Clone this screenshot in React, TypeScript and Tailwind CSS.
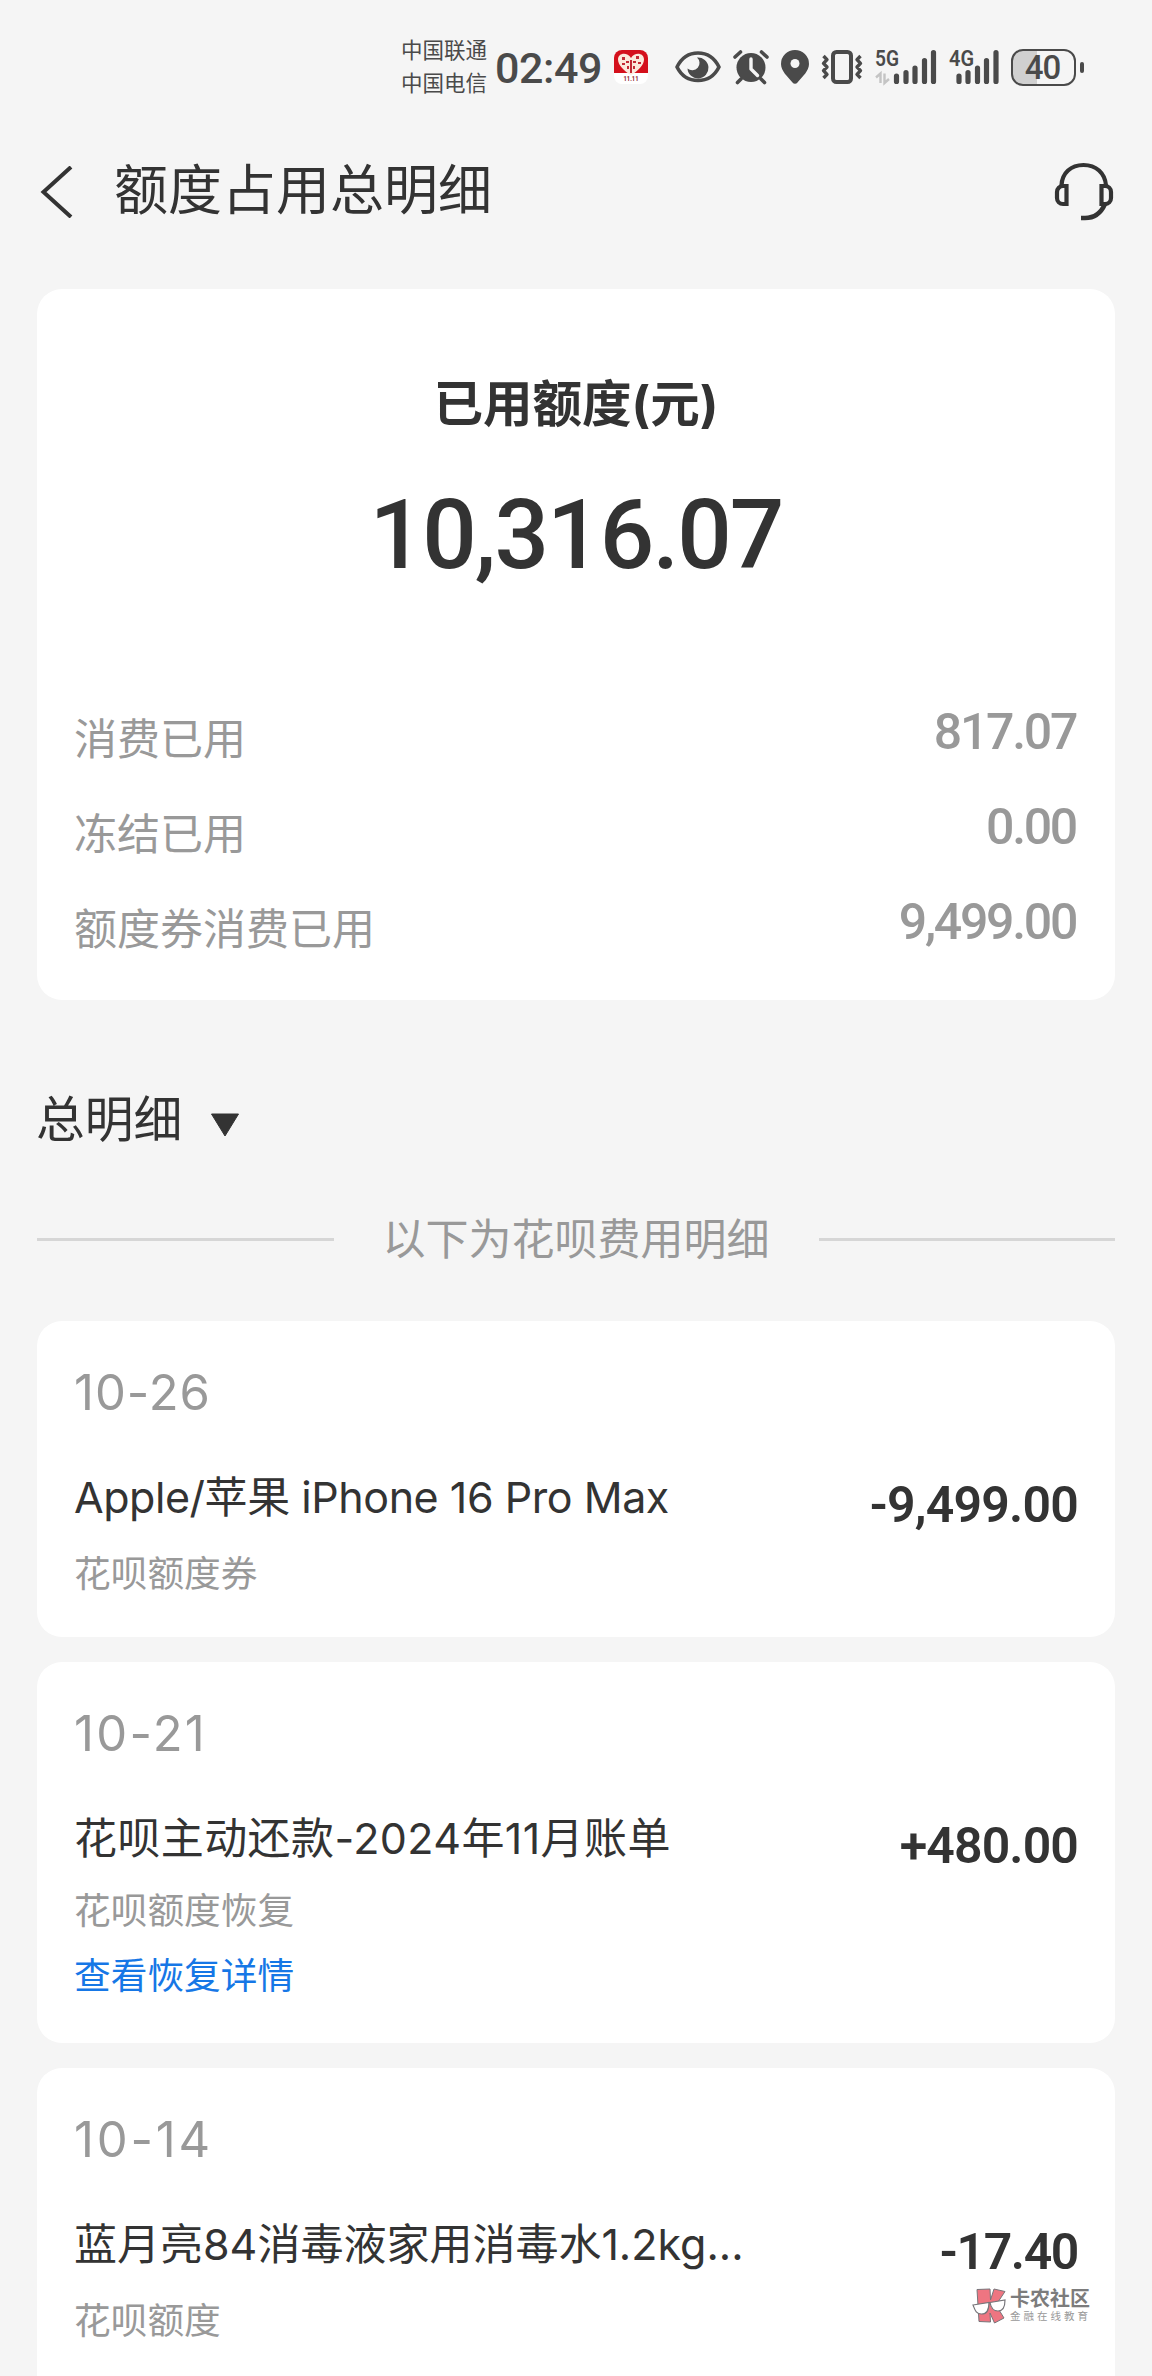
type UsageRowParams = {
    label: string,
    value: string,
}

type BillItem = {
    date: string,
    dateClass: string,
    title: string,
    titleClass: string,
    source: string,
    sourceClass: string,
    amount: string,
    amountClass: string,
    cardClass: string,
    link?: string,
}

const usageRows: UsageRowParams[] = [
    { label: "消费已用", value: "817.07" },
    { label: "冻结已用", value: "0.00" },
    { label: "额度券消费已用", value: "9,499.00" },
]

const billItems: BillItem[] = [
    {
        date: "10-26",
        dateClass: "tracking-[1px]",
        title: "Apple/苹果 iPhone 16 Pro Max",
        titleClass: "tracking-[-0.45px]",
        source: "花呗额度券",
        sourceClass: "mt-[22px]",
        amount: "-9,499.00",
        amountClass: "tracking-[-0.8px]",
        cardClass: "h-[316px]",
    },
    {
        date: "10-21",
        dateClass: "tracking-[2.3px]",
        title: "花呗主动还款-2024年11月账单",
        titleClass: "tracking-[0.4px]",
        source: "花呗额度恢复",
        sourceClass: "mt-[18px]",
        amount: "+480.00",
        amountClass: "tracking-[-0.9px]",
        cardClass: "h-[381px]",
        link: "查看恢复详情",
    },
    {
        date: "10-14",
        dateClass: "tracking-[2.8px]",
        title: "蓝月亮84消毒液家用消毒水1.2kg...",
        titleClass: "",
        source: "花呗额度",
        sourceClass: "mt-[22px]",
        amount: "-17.40",
        amountClass: "tracking-[-1.4px]",
        cardClass: "h-[340px]",
    },
]

function PromoIcon() {
    return (
        <svg className="ml-[13px] h-[34px] w-[34px]" viewBox="0 0 34 34">
            <rect x="0" y="0" width="34" height="34" rx="8" fill="#fff" />
            <path d="M0 23V8a8 8 0 0 1 8-8h18a8 8 0 0 1 8 8v15z" fill="#d4101c" />
            <path d="M17 25C10 21 4 15 4 9.500C4 3 13 1.500 17 8C21 1.500 30 3 30 9.500C30 15 24 21 17 25Z" fill="#fbe9dc" />
            <path d="M8 7h3v3H8zM12 11h3v2h-3zM22 6h3v3h-3zM19 11h3v2h-3zM8 13h3v2H8zM24 12h3v2h-3zM13 16h2v3h-2zM19 16h2v3h-2zM16 10h2v13h-2z" fill="#c22a35" />
            <text x="17" y="31" textAnchor="middle" fontSize="7.5" fontWeight="700" fontFamily="Roboto, sans-serif" textLength="15" lengthAdjust="spacingAndGlyphs" fill="#8c1d2a">11.11</text>
        </svg>
    );
}

function EyeIcon() {
    return (
        <svg className="ml-[27px] h-[34px] w-[46px]" viewBox="0 0 46 34">
            <path d="M2 17C7 7 15 3 23 3S39 7 44 17C39 27 31 30.500 23 30.500S7 27 2 17Z" fill="none" stroke="#4a4a4a" strokeWidth="3.600" strokeLinejoin="round" />
            <path d="M22 7.500A10.500 10.500 0 1 1 12.500 18.500A7 7 0 0 0 22 7.500Z" fill="#4a4a4a" />
        </svg>
    );
}

function AlarmIcon() {
    return (
        <svg className="ml-[12px] h-[36px] w-[36px]" viewBox="0 0 36 36" strokeLinecap="round" fill="none">
            <circle cx="18" cy="18.500" r="14.500" fill="#4a4a4a" />
            <path d="M2 8L7.500 3M34 8L28.500 3M8 30L4.500 33.500M28 30L31.500 33.500" stroke="#4a4a4a" strokeWidth="3.600" />
            <path d="M18 10v10l6.500 6.500" stroke="#f5f5f5" strokeWidth="3.400" strokeLinejoin="round" />
        </svg>
    );
}

function PinIcon() {
    return (
        <svg className="ml-[12px] h-[34px] w-[28px]" viewBox="0 0 28 34">
            <path d="M14 0a14 14 0 0 1 14 14c0 7-6.500 12.500-11.500 18.500a3.200 3.200 0 0 1-5 0C6.500 26.500 0 21 0 14A14 14 0 0 1 14 0Z" fill="#4a4a4a" />
            <circle cx="14" cy="13.500" r="4.500" fill="#f5f5f5" />
        </svg>
    );
}

function VibrateIcon() {
    return (
        <svg className="ml-[12px] h-[34px] w-[42px]" viewBox="0 0 42 34" fill="none" stroke="#4a4a4a">
            <rect x="12" y="2" width="18" height="30" rx="3.500" strokeWidth="4" />
            <path d="M2.500 6l3.500 3.700-3.500 3.700L6 17l-3.500 3.600L6 24.300 2.500 28M39.500 6L36 9.700l3.500 3.700L36 17l3.500 3.600-3.500 3.700 3.500 3.700" strokeWidth="3.400" strokeLinejoin="round" />
        </svg>
    );
}

function SignalFive() {
    return (
        <svg className="ml-[12px] h-[34px] w-[62px] overflow-visible" viewBox="0 0 62 34">
            <text x="0" y="16" fontSize="22" fontWeight="600" fontFamily="Roboto, sans-serif" textLength="24" lengthAdjust="spacingAndGlyphs" fill="#4a4a4a">5G</text>
            <path d="M1 27.500L5.500 23.500V33M14 29L9.500 33V23.500" fill="none" stroke="#c4c4c4" strokeWidth="2.400" />
            <path d="M21.500 26v5.500M31 22.500v9M40 18v13.500M49.500 10.500v21M58.500 2.500v29" stroke="#4a4a4a" strokeWidth="5.200" strokeLinecap="round" />
        </svg>
    );
}

function SignalFour() {
    return (
        <svg className="ml-[12px] h-[34px] w-[50px] overflow-visible" viewBox="0 0 50 34">
            <text x="0" y="16" fontSize="22" fontWeight="600" fontFamily="Roboto, sans-serif" textLength="25" lengthAdjust="spacingAndGlyphs" fill="#4a4a4a">4G</text>
            <path d="M10 26v5.500M19 22.500v9M28.500 18v13.500M37.500 10.500v21M47 2.500v29" stroke="#4a4a4a" strokeWidth="5.200" strokeLinecap="round" />
        </svg>
    );
}

function Battery() {
    return (
        <div className="ml-[12px] flex items-center">
            <div className="flex h-[37px] w-[65px] items-center justify-center rounded-[12px] border-[2.5px] border-[#4a4a4a] bg-linear-to-r from-[#d0d0d0] from-40% to-[#f5f5f5] to-40% pr-[2px] font-[Roboto] text-[33px] leading-none font-medium tracking-[-1px]">40</div>
            <div className="ml-[4px] h-[11px] w-[4px] rounded-full bg-[#4a4a4a]"></div>
        </div>
    );
}

function StatusBar() {
    return (
        <div className="flex h-[134px] items-center pl-[401px] text-[#4a4a4a]">
            <div className="text-[21.5px] leading-[33px]">
                <p>中国联通</p>
                <p>中国电信</p>
            </div>
            <p className="mt-[2px] ml-[8px] w-[106px] font-[Roboto] text-[43px] leading-none font-medium tracking-[-0.4px] whitespace-nowrap">02:49</p>
            <PromoIcon />
            <EyeIcon />
            <AlarmIcon />
            <PinIcon />
            <VibrateIcon />
            <SignalFive />
            <SignalFour />
            <Battery />
        </div>
    );
}

function Header() {
    return (
        <div className="flex h-[112px] items-center pr-[38px] pl-[40px]">
            <svg className="mt-[4px] h-[52px] w-[33px]" viewBox="0 0 33 52">
                <path d="M31 1L3.500 26L31 51" fill="none" stroke="#333" strokeWidth="4" />
            </svg>
            <h1 className="mt-[2px] ml-[41px] text-[54px] leading-[60px]">额度占用总明细</h1>
            <svg className="mt-[4px] ml-auto h-[60px] w-[60px]" viewBox="0 0 60 60" fill="none" stroke="#333" strokeWidth="4.2">
                <path d="M7.500 23.500C8 11 17 3 29.500 3S51 11 52 23.500" />
                <path d="M12.500 24H9a6 6 0 0 0-6 6v6a6 6 0 0 0 6 6h3.500zM47.500 24H51a6 6 0 0 1 6 6v6a6 6 0 0 1-6 6h-3.500z" />
                <path d="M51 42C47 51 40 56 31 56H27" strokeWidth="4.500" />
            </svg>
        </div>
    );
}

function UsageRow({ label, value }: UsageRowParams) {
    return (
        <div className="flex h-[95px] items-center justify-between">
            <span className="text-[43px] leading-[60px]">{label}</span>
            <span className="mr-[2px] mb-[13px] font-[Roboto] text-[50px] leading-[60px] font-medium tracking-[-2.3px]">{value}</span>
        </div>
    );
}

function SummaryCard() {
    return (
        <div className="mx-[37px] mt-[43px] h-[711px] rounded-[25px] bg-white px-[37px] pt-[80px]">
            <h2 className="text-center text-[49.5px] leading-[70px] font-bold">已用额度(元)</h2>
            <p className="mt-[41px] text-center font-[Roboto] text-[96px] leading-[110px] font-medium tracking-[-1.9px]">10,316.07</p>
            <div className="mt-[101px] text-[#999]">
                {usageRows.map((row) => <UsageRow key={row.label} {...row} />)}
            </div>
        </div>
    );
}

function BillCard({ item }: { item: BillItem }) {
    return (
        <div className={`rounded-[25px] bg-white px-[37px] pt-[42px] ${item.cardClass}`}>
            <p className={`text-[49px] leading-[60px] text-[#999] ${item.dateClass}`}>{item.date}</p>
            <div className="mt-[44px] flex h-[60px] justify-between">
                <p className={`text-[43px] leading-[60px] whitespace-nowrap ${item.titleClass}`}>{item.title}</p>
                <p className={`mt-[8px] font-[Roboto] text-[50px] leading-[60px] font-semibold ${item.amountClass}`}>{item.amount}</p>
            </div>
            <p className={`text-[36.7px] leading-[50px] text-[#999] ${item.sourceClass}`}>{item.source}</p>
            {item.link ? <a className="mt-[15px] block text-[36.7px] leading-[50px] text-[#1677e6]">{item.link}</a> : ''}
        </div>
    );
}

function Watermark() {
    return (
        <div className="absolute top-[2288px] left-[972px] flex items-center gap-[4px]">
            <svg className="h-[36px] w-[34px]" viewBox="0 0 34 36">
                <path d="M5 1.500L18 1L18.500 12L22 1L33 3.500L24 17L32 30L22.500 35L18 25L18.500 34L7 33.500Z" fill="#ee7581" stroke="#77757a" strokeWidth="1" />
                <path d="M1 17L17 14.500C17 22 15 26 9.500 26S3 22 1 17ZM18 14.500L33 12C33 19 31 23 26 23S19 20 18 14.500Z" fill="#fff" stroke="#77757a" strokeWidth="1.200" />
            </svg>
            <div className="w-[80px] whitespace-nowrap">
                <p className="text-[20px] leading-[21px] font-bold text-[#7c7c7c]">卡农社区</p>
                <p className="text-[10.5px] leading-[13px] tracking-[3px] text-[#999]">金融在线教育</p>
            </div>
        </div>
    );
}

function App() {
    return (
        <div className="relative h-[2376px] w-[1152px] overflow-hidden bg-[#f5f5f5] font-[Inter,'Noto_Sans_CJK_SC',sans-serif] text-[#333]">
            <StatusBar />
            <Header />
            <SummaryCard />
            <div className="mt-[85px] flex h-[70px] items-center pl-[36px]">
                <span className="text-[48.8px] leading-[70px]">总明细</span>
                <svg className="mt-[10px] ml-[28px] h-[24px] w-[30px]" viewBox="0 0 30 24">
                    <path d="M1.500 1H28.500L15 23Z" fill="#333" stroke="#333" strokeLinejoin="round" />
                </svg>
            </div>
            <div className="mx-[37px] mt-[54px] flex h-[60px] items-center">
                <div className="h-[3px] flex-1 bg-[#d6d6d6]"></div>
                <p className="mx-[49px] text-[43px] leading-[60px] text-[#999]">以下为花呗费用明细</p>
                <div className="h-[3px] flex-1 bg-[#d6d6d6]"></div>
            </div>
            <div className="mx-[37px] mt-[52px] flex flex-col gap-[25px]">
                {billItems.map((item) => <BillCard key={item.date} item={item} />)}
            </div>
            <Watermark />
        </div>
    );
};

export default App;
